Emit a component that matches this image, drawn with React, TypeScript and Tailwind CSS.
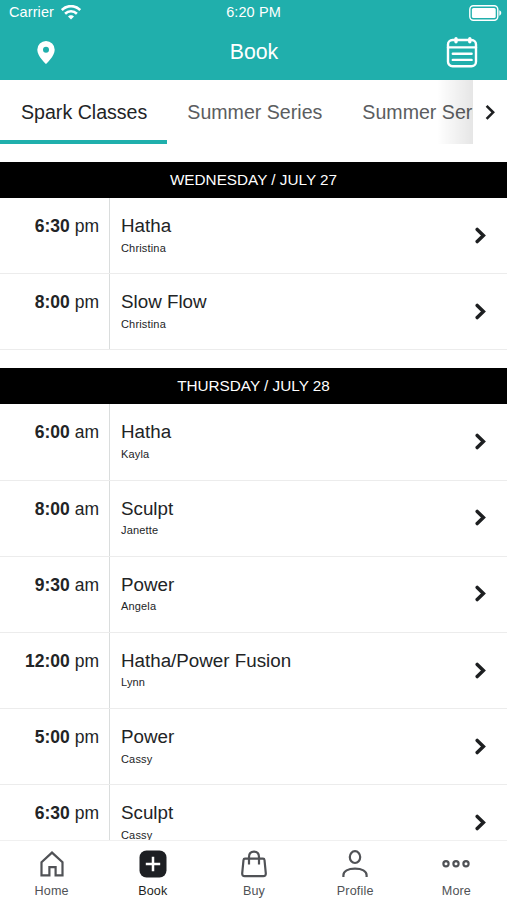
import React, { useState } from 'react';

interface ClassItem {
  time: string;
  period: string;
  name: string;
  teacher: string;
}

interface Day {
  label: string;
  classes: ClassItem[];
}

const days: Day[] = [
  {
    label: 'WEDNESDAY / JULY 27',
    classes: [
      { time: '6:30', period: 'pm', name: 'Hatha', teacher: 'Christina' },
      { time: '8:00', period: 'pm', name: 'Slow Flow', teacher: 'Christina' },
    ],
  },
  {
    label: 'THURSDAY / JULY 28',
    classes: [
      { time: '6:00', period: 'am', name: 'Hatha', teacher: 'Kayla' },
      { time: '8:00', period: 'am', name: 'Sculpt', teacher: 'Janette' },
      { time: '9:30', period: 'am', name: 'Power', teacher: 'Angela' },
      { time: '12:00', period: 'pm', name: 'Hatha/Power Fusion', teacher: 'Lynn' },
      { time: '5:00', period: 'pm', name: 'Power', teacher: 'Cassy' },
      { time: '6:30', period: 'pm', name: 'Sculpt', teacher: 'Cassy' },
    ],
  },
];

const tabs = ['Spark Classes', 'Summer Series', 'Summer Series'];

const StatusBar: React.FC = () => (
  <div className="grid h-6 grid-cols-3 items-center pl-[9px] pr-[5px] text-[14.5px] leading-6 tracking-[0.1px]">
    <div className="flex items-center gap-[7px]">
      <span>Carrier</span>
      <svg className="mt-px h-[15px] w-5" viewBox="0 0 20 15" fill="none" stroke="currentColor" strokeWidth="2.6">
        <path d="M.8 5.1C6-.2 14-.2 19.2 5.1" />
        <path d="M4.1 8.7c3.4-3.3 8.4-3.3 11.8 0" />
        <path d="M10 14.6 7 11.6c1.6-1.8 4.4-1.8 6 0z" fill="currentColor" stroke="none" />
      </svg>
    </div>
    <span className="pr-[4px] text-center">6:20 PM</span>
    <svg className="mt-px h-4 w-[33px] justify-self-end" viewBox="0 0 33 16" fill="none">
      <rect x=".8" y=".8" width="28" height="14.4" rx="3.6" stroke="currentColor" strokeWidth="1.4" />
      <rect x="2.9" y="2.9" width="23.8" height="10.2" rx="1.6" fill="currentColor" />
      <path d="M30.3 5.3c2.6.8 2.6 4.6 0 5.4z" fill="currentColor" />
    </svg>
  </div>
);

const Header: React.FC = () => (
  <header className="h-20 shrink-0 bg-[#20afac] text-white">
    <StatusBar />
    <div className="flex h-14 items-center justify-between pl-[37px] pr-[29px]">
      <svg className="h-[23px] w-[18px]" viewBox="0 0 18 23">
        <path
          fill="currentColor"
          fillRule="evenodd"
          d="M9 0a8.7 8.7 0 0 0-8.7 8.7C.3 15.2 9 23 9 23s8.7-7.8 8.7-14.3A8.7 8.7 0 0 0 9 0zm0 5.8a3 3 0 1 1 0 6 3 3 0 0 1 0-6z"
        />
      </svg>
      <h1 className="pl-[7px] pt-[2px] text-[21.3px]">Book</h1>
      <svg className="h-[31px] w-8" viewBox="0 0 32 31" fill="none" stroke="currentColor" strokeWidth="2.4" strokeLinecap="round">
        <rect x="2" y="3" width="28" height="26.2" rx="4.5" />
        <path d="M2 10.4h28M6.8 16.8h18.8M6.8 22.9h18.8" />
        <path d="M10 1.8v3M23.8 1.8v3" strokeWidth="3.4" />
      </svg>
    </div>
  </header>
);

const Chevron: React.FC = () => (
  <svg className="mb-px h-[17px] w-[12px] text-[#1d1f21]" viewBox="0 0 12 17" fill="none" stroke="currentColor" strokeWidth="3.5">
    <path strokeLinecap="round" d="M2.2 2.4 8.4 8.5l-6.2 6.1" />
  </svg>
);

const ClassRow: React.FC<{ item: ClassItem }> = ({ item }) => (
  <li className="flex h-[76.2px] border-b border-[#ececec]">
    <div className="w-[110px] border-r border-[#dadddd] pr-[10px] pt-4 text-right text-[17.5px] leading-6">
      <b>{item.time}</b> {item.period}
    </div>
    <div className="flex-1 pl-[11px] pt-4">
      <p className="text-[18.8px] leading-6">{item.name}</p>
      <p className="mt-[1.5px] text-[11px] leading-4 tracking-[0.17px]">{item.teacher}</p>
    </div>
    <div className="flex items-center pr-[20px]">
      <Chevron />
    </div>
  </li>
);

const navItems = [
  {
    label: 'Home',
    icon: <path d="M3.5 12.2 14 2.6l10.5 9.6v13.2h-6.9v-8.3h-6.2v8.3H3.5z" />,
  },
  {
    label: 'Book',
    icon: (
      <>
        <rect x=".5" y=".5" width="27" height="27" rx="7" fill="currentColor" stroke="none" />
        <path d="M14 6.8v14.4M6.8 14h14.4" stroke="#fff" strokeWidth="2.5" />
      </>
    ),
  },
  {
    label: 'Buy',
    icon: (
      <>
        <path d="M5 8.7h18c.9 0 1.4.4 1.5 1.3l1.3 13.3c.1 1.9-.8 2.9-2.5 2.9H4.7c-1.7 0-2.6-1-2.5-2.9L3.5 10c.1-.9.6-1.3 1.5-1.3z" />
        <path d="M9 14.5V7c0-3.4 1.9-5.4 5-5.4s5 2 5 5.4v7.5" />
      </>
    ),
  },
  {
    label: 'Profile',
    icon: (
      <>
        <ellipse cx="14" cy="7.1" rx="5.2" ry="5.9" />
        <path d="M2.4 27.1v-1.8c0-4.2 4.7-6.7 11.6-6.7s11.6 2.5 11.6 6.7v1.8" />
      </>
    ),
  },
  {
    label: 'More',
    icon: (
      <>
        <circle cx="4" cy="13.8" r="2.6" />
        <circle cx="14" cy="13.8" r="2.6" />
        <circle cx="24" cy="13.8" r="2.6" />
      </>
    ),
  },
];

const App: React.FC = () => {
  const [activeTab, setActiveTab] = useState(0);
  const [activeNav, setActiveNav] = useState('Book');

  return (
    <div className="flex h-[900px] w-[507px] flex-col overflow-hidden bg-white font-['Liberation_Sans',Arial,sans-serif] text-[#222426]">
      <Header />

      <div className="flex h-16 shrink-0">
        <div className="relative flex w-[472.5px] overflow-hidden">
          {tabs.map((tab, i) => (
            <button
              key={i}
              className={`shrink-0 whitespace-nowrap border-b-4 px-5 pt-[5px] text-[19.6px] first:pl-[21px] ${activeTab === i ? 'border-[#20afac] text-[#222426]' : 'border-transparent text-[#5b5d60]'}`}
              onClick={() => setActiveTab(i)}
            >
              {tab}
            </button>
          ))}
          <div className="pointer-events-none absolute inset-y-0 right-0 w-[36px] bg-gradient-to-r from-transparent to-black/10" />
        </div>
        <div className="flex flex-1 items-center pl-3">
          <svg className="h-[17px] w-[12px] text-[#1d1f21]" viewBox="0 0 12 17" fill="none" stroke="currentColor" strokeWidth="2.6">
            <path d="m1.6 1.8 6.5 6.5-6.5 6.5" />
          </svg>
        </div>
      </div>

      <main className="min-h-0 flex-1 overflow-hidden pt-[18px]">
        {days.map((day) => (
          <section key={day.label} className="mb-[18px]">
            <h2 className="h-9 bg-black text-center text-[15.3px] leading-9 text-white">{day.label}</h2>
            <ul>
              {day.classes.map((item, i) => (
                <ClassRow key={i} item={item} />
              ))}
            </ul>
          </section>
        ))}
      </main>

      <nav className="grid h-[60px] shrink-0 grid-cols-5 border-t border-[#f0f0f0] bg-white pl-px">
        {navItems.map(({ label, icon }) => (
          <button
            key={label}
            className={`flex flex-col items-center pt-[9px] text-[12.6px] tracking-[0.15px] ${activeNav === label ? 'text-[#1d1f23]' : 'text-[#505256]'}`}
            onClick={() => setActiveNav(label)}
          >
            <svg className="h-7 w-7" viewBox="0 0 28 28" fill="none" stroke="currentColor" strokeWidth="2.2">
              {icon}
            </svg>
            <span className="mt-[5px] leading-4">{label}</span>
          </button>
        ))}
      </nav>
    </div>
  );
};

export default App;
